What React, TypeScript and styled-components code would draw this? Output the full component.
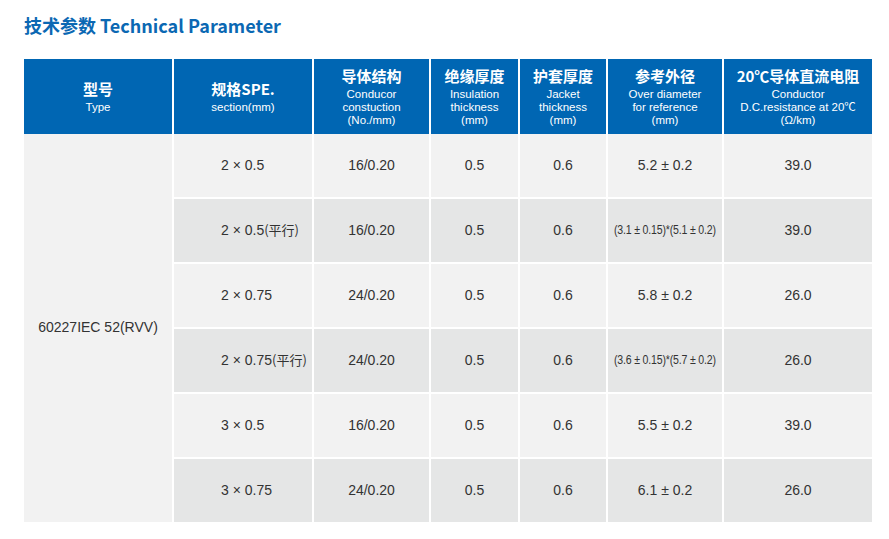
import React from "react";
import styled, { createGlobalStyle } from "styled-components";

const Global = createGlobalStyle`
  html, body { margin: 0; padding: 0; background: #ffffff; }
  body { font-family: "Liberation Sans", Arial, "Noto Sans CJK SC", sans-serif; color: #333333; }
`;

const Page = styled.div`
  width: 889px;
  height: 539px;
  padding: 12px 17px 0 24px;
  box-sizing: border-box;
`;

const Title = styled.h1`
  margin: 0;
  font-family: "Noto Sans CJK SC", "Liberation Sans", sans-serif;
  font-weight: 700;
  font-size: 18px;
  line-height: 26px;
  color: #0b68b3;
  height: 47px;
`;

const cols = "148px 138px 115px 87px 86px 114px 148px";

const HeadRow = styled.div`
  display: grid;
  grid-template-columns: ${cols};
  column-gap: 2px;
  background: #ffffff;
  height: 75px;
`;

const HeadCell = styled.div`
  background: #0066b3;
  color: #ffffff;
  display: flex;
  flex-direction: column;
  align-items: center;
  justify-content: center;
  text-align: center;
`;

const HeadZh = styled.div`
  font-family: "Noto Sans CJK SC", sans-serif;
  font-weight: 700;
  font-size: 15px;
  line-height: 18px;
  margin-bottom: 3px;
`;

const HeadEn = styled.div`
  font-family: "Liberation Sans", Arial, "Noto Sans CJK SC", sans-serif;
  font-size: 11.5px;
  line-height: 13px;
  white-space: nowrap;
`;

const Body = styled.div`
  display: grid;
  grid-template-columns: ${cols};
  grid-template-rows: repeat(6, 63px);
  gap: 2px;
  background: #ffffff;
`;

const Cell = styled.div<{ $alt?: boolean; $span?: number; $left?: boolean }>`
  background: ${(p) => (p.$alt ? "#e5e6e6" : "#f2f2f2")};
  display: flex;
  align-items: center;
  justify-content: ${(p) => (p.$left ? "flex-start" : "center")};
  padding-left: ${(p) => (p.$left ? "47px" : "0")};
  padding-bottom: 2px;
  font-size: 14px;
  color: #333333;
  white-space: nowrap;
  ${(p) => (p.$span ? `grid-row: span ${p.$span};` : "")}
`;

const Narrow = styled.span`
  display: inline-block;
  font-size: 12px;
  transform: scaleX(0.88);
  letter-spacing: -0.2px;
`;

const Zh = styled.span`
  font-family: "Noto Sans CJK SC", sans-serif;
  font-size: 13px;
`;

type Row = {
  spec: React.ReactNode;
  cond: string;
  ins: string;
  jack: string;
  dia: React.ReactNode;
  res: string;
};

const rows: Row[] = [
  { spec: "2 × 0.5", cond: "16/0.20", ins: "0.5", jack: "0.6", dia: "5.2 ± 0.2", res: "39.0" },
  {
    spec: <>2 × 0.5<Zh>(平行)</Zh></>,
    cond: "16/0.20",
    ins: "0.5",
    jack: "0.6",
    dia: <Narrow>(3.1 ± 0.15)*(5.1 ± 0.2)</Narrow>,
    res: "39.0",
  },
  { spec: "2 × 0.75", cond: "24/0.20", ins: "0.5", jack: "0.6", dia: "5.8 ± 0.2", res: "26.0" },
  {
    spec: <>2 × 0.75<Zh>(平行)</Zh></>,
    cond: "24/0.20",
    ins: "0.5",
    jack: "0.6",
    dia: <Narrow>(3.6 ± 0.15)*(5.7 ± 0.2)</Narrow>,
    res: "26.0",
  },
  { spec: "3 × 0.5", cond: "16/0.20", ins: "0.5", jack: "0.6", dia: "5.5 ± 0.2", res: "39.0" },
  { spec: "3 × 0.75", cond: "24/0.20", ins: "0.5", jack: "0.6", dia: "6.1 ± 0.2", res: "26.0" },
];

const headers: { zh: string; en: string[] }[] = [
  { zh: "型号", en: ["Type"] },
  { zh: "规格SPE.", en: ["section(mm)"] },
  { zh: "导体结构", en: ["Conducor", "constuction", "(No./mm)"] },
  { zh: "绝缘厚度", en: ["Insulation", "thickness", "(mm)"] },
  { zh: "护套厚度", en: ["Jacket", "thickness", "(mm)"] },
  { zh: "参考外径", en: ["Over diameter", "for reference", "(mm)"] },
  { zh: "20℃导体直流电阻", en: ["Conductor", "D.C.resistance at 20℃", "(Ω/km)"] },
];

export default function App() {
  return (
    <Page>
      <Global />
      <Title>技术参数 Technical Parameter</Title>
      <HeadRow>
        {headers.map((h) => (
          <HeadCell key={h.zh}>
            <HeadZh>{h.zh}</HeadZh>
            {h.en.map((l) => (
              <HeadEn key={l}>{l}</HeadEn>
            ))}
          </HeadCell>
        ))}
      </HeadRow>
      <Body>
        <Cell $span={6}>60227IEC 52(RVV)</Cell>
        {rows.map((r, i) => {
          const alt = i % 2 === 1;
          return (
            <React.Fragment key={i}>
              <Cell $alt={alt} $left>{r.spec}</Cell>
              <Cell $alt={alt}>{r.cond}</Cell>
              <Cell $alt={alt}>{r.ins}</Cell>
              <Cell $alt={alt}>{r.jack}</Cell>
              <Cell $alt={alt}>{r.dia}</Cell>
              <Cell $alt={alt}>{r.res}</Cell>
            </React.Fragment>
          );
        })}
      </Body>
    </Page>
  );
}
